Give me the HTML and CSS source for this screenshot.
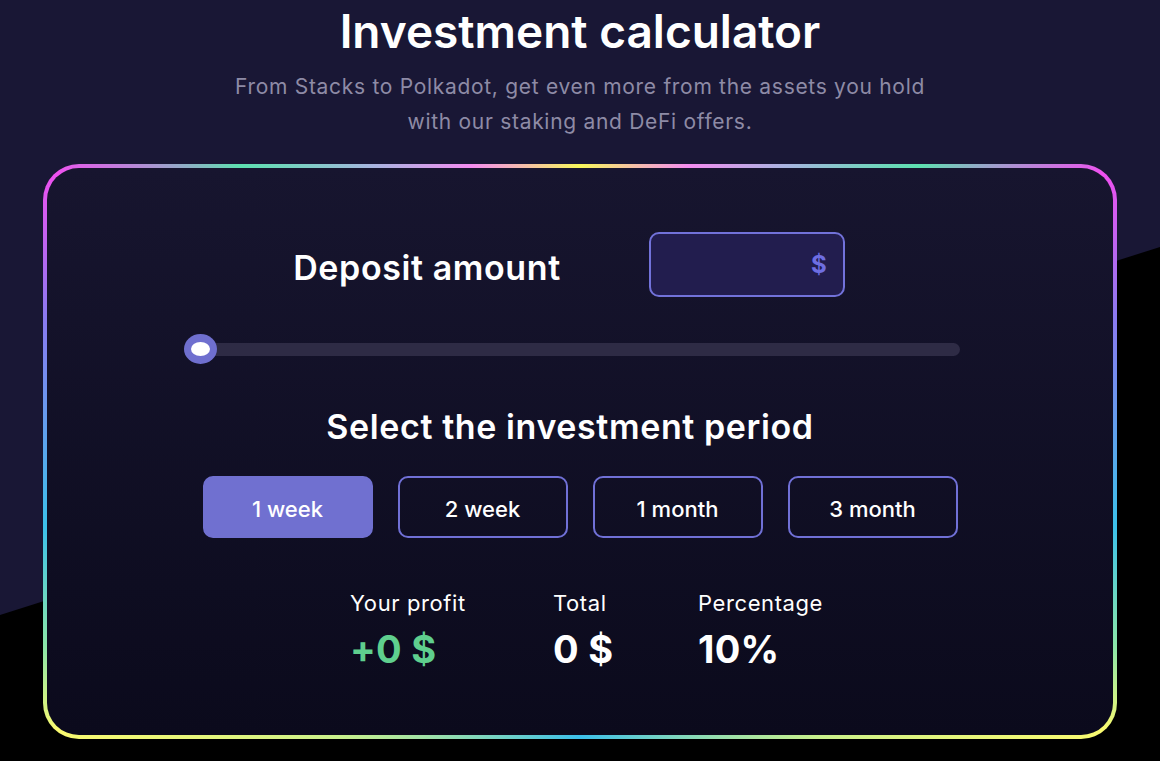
FILE: index.html
```html
<!DOCTYPE html>
<html lang="en">
  <head>
    <meta charset="UTF-8" />
    <meta name="viewport" content="width=device-width, initial-scale=1.0" />
    <title>Investment calculator</title>
    <link rel="stylesheet" href="styles.css">
  </head>
  <body>
    <!-- HEADER -->
    <header class="intro">
      <h1>Investment calculator</h1>
      <p class="subtitle">
        From Stacks to Polkadot, get even more from the assets you hold<br />
        with our staking and DeFi offers.
      </p>
    </header>

    <!-- CALCULATOR CARD -->
    <main class="calc">
      <div class="deposit-row">
        <h2 class="deposit-title">Deposit amount</h2>
        <label class="amount-box">
          <input type="text" class="amount-input" value="" />
          <span class="currency">$</span>
        </label>
      </div>

      <div class="slider">
        <div class="track"></div>
        <div class="thumb"><span></span></div>
      </div>

      <h2 class="period-title">Select the investment period</h2>
      <div class="periods">
        <button class="period active">1 week</button>
        <button class="period">2 week</button>
        <button class="period">1 month</button>
        <button class="period">3 month</button>
      </div>

      <div class="results">
        <div class="result">
          <div class="result-label">Your profit</div>
          <div class="result-value profit">+0 $</div>
        </div>
        <div class="result">
          <div class="result-label">Total</div>
          <div class="result-value">0 $</div>
        </div>
        <div class="result">
          <div class="result-label">Percentage</div>
          <div class="result-value">10%</div>
        </div>
      </div>
    </main>
  </body>
</html>
```

FILE: styles.css
```css
/* GLOBAL */
html,
body {
  margin: 0;
  padding: 0;
  height: 100%;
  overflow: hidden;
}
*,
*::before,
*::after {
  box-sizing: border-box;
}

body {
  font-family: Inter, "Noto Sans", sans-serif;
  background-color: #191735;
  color: #fff;
  position: relative;
  min-height: 761px;
}

/* black diagonal in the background */
body::before {
  content: "";
  position: absolute;
  inset: 0;
  background: #000;
  clip-path: polygon(0 615px, 100% 247px, 100% 100%, 0 100%);
  z-index: 0;
}

/* HEADER */
.intro {
  position: relative;
  z-index: 1;
  text-align: center;
}
.intro h1 {
  margin: 0;
  font-size: 46px;
  line-height: 62px;
  font-weight: 600;
}
.subtitle {
  margin: 7px 0 0;
  font-size: 21px;
  line-height: 35px;
  color: #8e8ba6;
  letter-spacing: 0.7px;
}

/* CARD WITH GRADIENT BORDER */
.calc {
  position: relative;
  z-index: 1;
  width: 1074px;
  height: 575px;
  margin: 25px auto 0;
  padding-top: 64px;
  border: 4px solid transparent;
  border-radius: 36px;
  background:
    linear-gradient(180deg, #17152f 0%, #0b0a1c 100%) padding-box,
    conic-gradient(
      from 0deg at 50% 50%,
      #f7f75a 0deg,
      #f38cf0 21deg,
      #a8b4e0 36deg,
      #5de0b0 50deg,
      #f050f0 62deg,
      #8a7af0 76deg,
      #3cc0ea 98deg,
      #8ae6a8 110deg,
      #fafa70 118deg,
      #c8f08c 140deg,
      #3cc0ea 180deg,
      #c8f08c 220deg,
      #fafa70 242deg,
      #8ae6a8 250deg,
      #3cc0ea 262deg,
      #8a7af0 284deg,
      #f050f0 298deg,
      #5de0b0 310deg,
      #a8b4e0 324deg,
      #f38cf0 339deg,
      #f7f75a 360deg
    ) border-box;
}

/* DEPOSIT */
.deposit-row {
  display: flex;
  justify-content: center;
  align-items: center;
  gap: 88px;
  height: 65px;
  margin-left: -22px;
}
.deposit-title,
.period-title {
  margin: 0;
  font-size: 34px;
  line-height: 44px;
  font-weight: 600;
  letter-spacing: 0.6px;
}
.deposit-title {
  padding-top: 6px;
}
.amount-box {
  display: flex;
  align-items: center;
  width: 196px;
  height: 65px;
  padding: 0 16px;
  background: #221d4e;
  border: 2px solid #7272da;
  border-radius: 10px;
}
.amount-input {
  flex: 1;
  min-width: 0;
  background: transparent;
  border: none;
  outline: none;
  color: #fff;
  font: inherit;
  font-size: 22px;
}
.currency {
  color: #6e6ee2;
  font-size: 24px;
  font-weight: 700;
}

/* SLIDER */
.slider {
  position: relative;
  width: 776px;
  height: 30px;
  margin: 37px 0 0 137px;
  display: flex;
  align-items: center;
}
.track {
  width: 100%;
  height: 13px;
  border-radius: 7px;
  background: #2e2b45;
}
.thumb {
  position: absolute;
  left: 0;
  top: 0;
  width: 33px;
  height: 30px;
  border-radius: 50%;
  background: #6f6fcf;
  display: flex;
  align-items: center;
  justify-content: center;
}
.thumb span {
  width: 19px;
  height: 14px;
  border-radius: 50%;
  background: #fff;
}

/* PERIOD */
.period-title {
  margin-top: 41px;
  padding-right: 20px;
  text-align: center;
}
.periods {
  display: flex;
  justify-content: center;
  gap: 25px;
  margin-top: 27px;
}
.period {
  width: 170px;
  height: 62px;
  padding-top: 5px;
  border: 2px solid #7070d6;
  border-radius: 10px;
  background: transparent;
  color: #fff;
  font-family: inherit;
  font-size: 22px;
  font-weight: 500;
  cursor: pointer;
}
.period.active {
  background: #7070d0;
  border-color: #7070d0;
}

/* RESULTS */
.results {
  display: grid;
  grid-template-columns: 115px 57px 132px;
  justify-content: center;
  column-gap: 88px;
  margin-top: 50px;
  padding-left: 20px;
}
.result-label {
  font-size: 22px;
  line-height: 30px;
  letter-spacing: 0.6px;
  white-space: nowrap;
}
.result-value {
  margin-top: 8px;
  font-size: 38px;
  line-height: 46px;
  font-weight: 700;
  letter-spacing: 0.3px;
  white-space: nowrap;
}
.result-value.profit {
  color: #5fcf8e;
}
```
